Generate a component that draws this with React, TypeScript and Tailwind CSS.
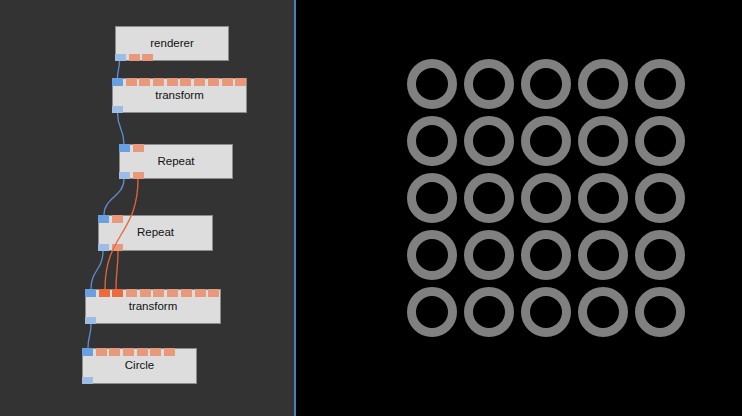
import React from "react";

type PortKind = "b" | "bl" | "o" | "oa";

const portClass: Record<PortKind, string> = {
  b: "bg-[#6a9fe0]",
  bl: "bg-[#9dbde5]",
  o: "bg-[#e9997b]",
  oa: "bg-[#ec6a3c]",
};

function Ports({ ports, bottom }: { ports: PortKind[]; bottom?: boolean }) {
  return (
    <div
      className={
        "absolute -left-px flex gap-[2.7px] " + (bottom ? "-bottom-px" : "-top-px")
      }
    >
      {ports.map((p, i) => (
        <div key={i} className={"w-[11px] h-[7.5px] " + portClass[p]} />
      ))}
    </div>
  );
}

function Node({
  label,
  x,
  y,
  w,
  h,
  top,
  bottom,
}: {
  label: string;
  x: number;
  y: number;
  w: number;
  h: number;
  top?: PortKind[];
  bottom?: PortKind[];
}) {
  return (
    <div
      className="absolute bg-[#dddddd] border border-[#8c8c8c] flex items-center justify-center text-[11.5px] text-[#111] font-['Liberation_Sans',Arial,sans-serif]"
      style={{ left: x, top: y, width: w, height: h }}
    >
      {top && <Ports ports={top} />}
      <span>{label}</span>
      {bottom && <Ports ports={bottom} bottom />}
    </div>
  );
}

function wire(x1: number, y1: number, x2: number, y2: number) {
  const my = (y1 + y2) / 2;
  return `M${x1},${y1} C${x1},${my} ${x2},${my} ${x2},${y2}`;
}

export default function App() {
  const nine = (active: number): PortKind[] =>
    Array.from({ length: 9 }, (_, i) => (i < active ? "oa" : "o"));
  return (
    <div className="flex w-[742px] h-[416px] overflow-hidden">
      <div className="relative w-[294px] h-full bg-[#333333]">
        <Node label="renderer" x={115} y={26} w={114} h={35} bottom={["bl", "o", "o"]} />
        <Node
          label="transform"
          x={112}
          y={78}
          w={135}
          h={35}
          top={["b", ...nine(0)]}
          bottom={["bl"]}
        />
        <Node
          label="Repeat"
          x={119}
          y={144}
          w={114}
          h={35}
          top={["b", "o"]}
          bottom={["bl", "o"]}
        />
        <Node
          label="Repeat"
          x={98}
          y={215}
          w={115}
          h={36}
          top={["b", "o"]}
          bottom={["bl", "o"]}
        />
        <Node
          label="transform"
          x={85}
          y={289}
          w={136}
          h={35}
          top={["b", ...nine(2)]}
          bottom={["bl"]}
        />
        <Node
          label="Circle"
          x={82}
          y={348}
          w={115}
          h={36}
          top={["b", "o", "o", "o", "o", "o", "o"]}
          bottom={["bl"]}
        />
        <svg className="absolute inset-0 pointer-events-none" width="294" height="416">
          <g fill="none" strokeWidth="1.3">
            <path d={wire(119.5, 61, 117.5, 78)} stroke="#5d8ed0" />
            <path d={wire(117.5, 113, 124, 144)} stroke="#5d8ed0" />
            <path d={wire(124, 179, 104, 215)} stroke="#5d8ed0" />
            <path d={wire(103, 251, 91, 289)} stroke="#5d8ed0" />
            <path d={wire(91, 324, 88, 348)} stroke="#5d8ed0" />
            <path d={wire(138, 179, 105, 289)} stroke="#e8643a" />
            <path d={wire(118, 251, 116, 289)} stroke="#e8643a" />
          </g>
        </svg>
      </div>
      <div className="w-[2px] h-full bg-[#4a7dc0]" />
      <div className="flex-1 h-full bg-black pl-[111px] pt-[59px]">
        <div className="grid grid-cols-5 gap-[7px] w-max">
          {Array.from({ length: 25 }, (_, i) => (
            <div
              key={i}
              className="w-[50px] h-[50px] rounded-full border-[9.3px] border-[#808080]"
            />
          ))}
        </div>
      </div>
    </div>
  );
}
